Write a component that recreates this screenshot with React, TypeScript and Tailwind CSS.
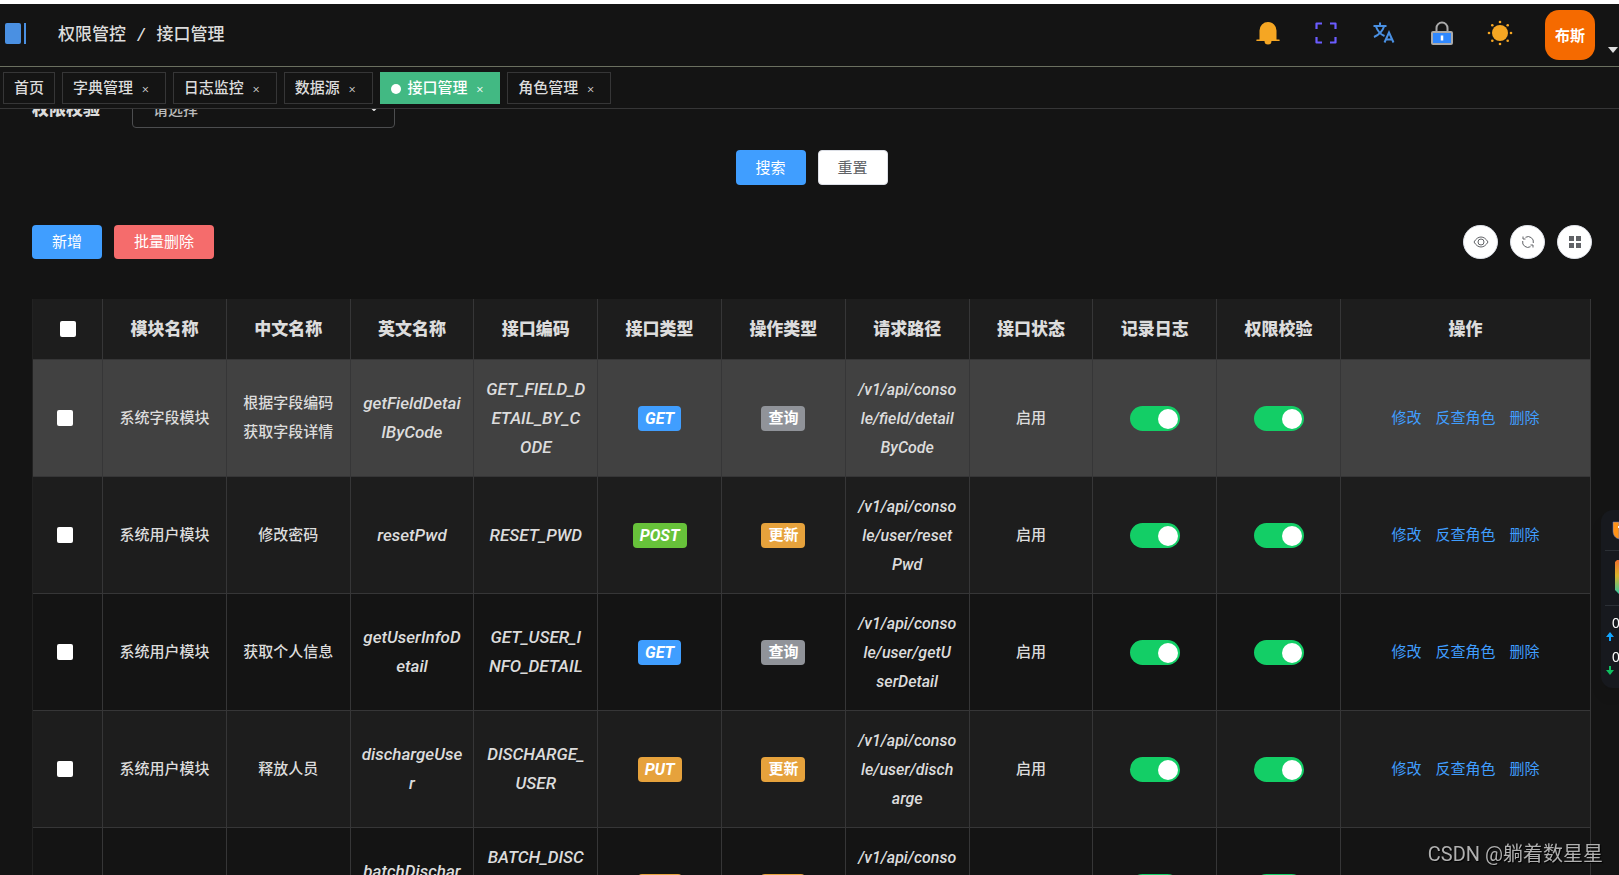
import { useState } from 'react';
import type { ReactNode } from 'react';

type Tone = 'blue' | 'green' | 'orange' | 'gray';

interface ApiRow {
  module: string;
  name: string;
  english: string;
  code: string;
  method: string;
  methodTone: Tone;
  action: string;
  actionTone: Tone;
  path: string;
}

const rows: ApiRow[] = [
  {
    module: '系统字段模块',
    name: '根据字段编码\n获取字段详情',
    english: 'getFieldDetai\nlByCode',
    code: 'GET_FIELD_D\nETAIL_BY_C\nODE',
    method: 'GET',
    methodTone: 'blue',
    action: '查询',
    actionTone: 'gray',
    path: '/v1/api/conso\nle/field/detail\nByCode',
  },
  {
    module: '系统用户模块',
    name: '修改密码',
    english: 'resetPwd',
    code: 'RESET_PWD',
    method: 'POST',
    methodTone: 'green',
    action: '更新',
    actionTone: 'orange',
    path: '/v1/api/conso\nle/user/reset\nPwd',
  },
  {
    module: '系统用户模块',
    name: '获取个人信息',
    english: 'getUserInfoD\netail',
    code: 'GET_USER_I\nNFO_DETAIL',
    method: 'GET',
    methodTone: 'blue',
    action: '查询',
    actionTone: 'gray',
    path: '/v1/api/conso\nle/user/getU\nserDetail',
  },
  {
    module: '系统用户模块',
    name: '释放人员',
    english: 'dischargeUse\nr',
    code: 'DISCHARGE_\nUSER',
    method: 'PUT',
    methodTone: 'orange',
    action: '更新',
    actionTone: 'orange',
    path: '/v1/api/conso\nle/user/disch\narge',
  },
  {
    module: '系统用户模块',
    name: '批量释放人员',
    english: 'batchDischar\ngeUser',
    code: 'BATCH_DISC\nHARGE_USE\nR',
    method: 'PUT',
    methodTone: 'orange',
    action: '更新',
    actionTone: 'orange',
    path: '/v1/api/conso\nle/user/batch\nDischarge',
  },
];

const headers = [
  '模块名称',
  '中文名称',
  '英文名称',
  '接口编码',
  '接口类型',
  '操作类型',
  '请求路径',
  '接口状态',
  '记录日志',
  '权限校验',
];

const tabs = ['首页', '字典管理', '日志监控', '数据源', '接口管理', '角色管理'];

const toneClass: Record<Tone, string> = {
  blue: 'bg-[#409eff]',
  green: 'bg-[#67c23a]',
  orange: 'bg-[#e6a23c]',
  gray: 'bg-[#909399]',
};

const cell = 'border-r border-b border-[#363637] p-0 text-center';

function Tag({ tone, children }: { tone: Tone; children: ReactNode }) {
  return (
    <span
      className={`inline-flex h-[25px] items-center rounded px-[7px] font-bold text-white ${toneClass[tone]}`}
    >
      {children}
    </span>
  );
}

function Toggle({ label }: { label: string }) {
  return (
    <input
      type="checkbox"
      role="switch"
      aria-label={label}
      defaultChecked
      className="mx-auto block h-[25px] w-[50px] appearance-none rounded-full bg-gray-500 p-[3px] pr-[2px] before:block before:h-[20px] before:w-[20px] before:rounded-full before:bg-white checked:bg-[#13ce66] checked:before:ml-auto"
    />
  );
}

function Check({ label }: { label: string }) {
  return (
    <input
      type="checkbox"
      aria-label={label}
      className="block size-4 appearance-none rounded-xs bg-white checked:bg-[#409eff]"
    />
  );
}

function BellIcon() {
  return (
    <svg width="24" height="24" viewBox="0 0 24 24" fill="#f5a623">
      <path d="M3.5 18.5V9.5a8.5 8.5 0 0 1 17 0v9h2.5a.8.8 0 0 1 0 1.6H1a.8.8 0 0 1 0-1.6z" />
      <path d="M8.5 20h7a3.5 3.5 0 0 1-7 0z" />
    </svg>
  );
}

function FullscreenIcon() {
  return (
    <svg width="22" height="22" viewBox="0 0 22 22" fill="none" stroke="#6b5cff" strokeWidth="2.200" strokeLinejoin="round">
      <path d="M1.500 7V1.500H7M15 1.500h5.500V7M20.500 15v5.500H15M7 20.500H1.500V15" />
    </svg>
  );
}

function TranslateIcon() {
  return (
    <svg width="22" height="22" viewBox="0 0 22 22" fill="none" stroke="#4a90e2" strokeWidth="2">
      <path d="M0.5 4h13M7 0.5V4M3 4.5c1.500 4.500 5 8 8.500 9.500M11 4.500c-1.500 5-5.500 8.500-10 10.500" />
      <path d="M11.500 20.500L16 10.500l4.500 10M13 17.500h6.500" />
    </svg>
  );
}

function LockIcon() {
  return (
    <svg width="22" height="24" viewBox="0 0 22 24">
      <path d="M5.500 11V7a5.500 5.500 0 0 1 11 0v4" fill="none" stroke="#aaa" strokeWidth="2" />
      <rect x="1" y="11" width="20" height="12" rx="1" fill="#2f88ff" stroke="#aaa" strokeWidth="2" />
      <path d="M11 14.500v5" stroke="#fff" strokeWidth="2.500" />
    </svg>
  );
}

function SunIcon() {
  return (
    <svg width="26" height="26" viewBox="0 0 26 26" fill="#f5a623">
      <circle cx="13" cy="13" r="8" />
      <circle cx="13" cy="2" r="1.300" />
      <circle cx="13" cy="24" r="1.300" />
      <circle cx="2" cy="13" r="1.300" />
      <circle cx="24" cy="13" r="1.300" />
      <circle cx="5.300" cy="5.300" r="1.300" />
      <circle cx="20.700" cy="5.300" r="1.300" />
      <circle cx="5.300" cy="20.700" r="1.300" />
      <circle cx="20.700" cy="20.700" r="1.300" />
    </svg>
  );
}

function IconButton({ label, children }: { label: string; children: ReactNode }) {
  return (
    <button type="button" aria-label={label} className="flex w-[26px] items-center justify-center">
      {children}
    </button>
  );
}

function Header() {
  return (
    <header className="flex h-[63px] shrink-0 items-center justify-between border-b border-[#6b7060] pl-[5px]">
      <div className="flex items-center">
        <button type="button" aria-label="折叠菜单" className="mb-1 flex h-[21px] gap-[3px]">
          <span className="h-full w-4 rounded-xs bg-[#4a90e2]" />
          <span className="h-full w-[2px] bg-[#4a90e2]" />
        </button>
        <nav className="ml-8 flex gap-3 text-[17px] font-medium text-[#dcdcdc]">
          <span>权限管控</span>
          <span className="italic">/</span>
          <span>接口管理</span>
        </nav>
      </div>
      <div className="flex items-center">
        <div className="flex items-center gap-8 pb-1">
          <IconButton label="消息"><BellIcon /></IconButton>
          <IconButton label="全屏"><FullscreenIcon /></IconButton>
          <IconButton label="语言"><TranslateIcon /></IconButton>
          <IconButton label="锁屏"><LockIcon /></IconButton>
          <IconButton label="主题"><SunIcon /></IconButton>
        </div>
        <button type="button" className="ml-8 flex items-end gap-3">
          <span className="flex size-[50px] items-center justify-center rounded-[14px] bg-[#f56a00] pt-[2px] text-[15px] font-bold text-white">
            布斯
          </span>
          <svg width="12" height="14" viewBox="0 0 12 14" fill="#dcdcdc">
            <path d="M1 1h10L6 7z" />
          </svg>
        </button>
      </div>
    </header>
  );
}

function TabBar() {
  const [active, setActive] = useState('接口管理');
  return (
    <div className="flex h-[42px] shrink-0 items-center gap-[7px] border-b border-[#363637] pl-[3px] text-[15px] font-medium">
      {tabs.map((tab) => (
        <button
          key={tab}
          type="button"
          onClick={() => setActive(tab)}
          className={`flex h-8 items-center border pt-[2px] pl-[10px] ${
            tab === active
              ? 'border-[#42b983] bg-[#42b983] text-white'
              : 'border-[#363637] text-[#dcdcdc]'
          } ${tab === '首页' ? 'pr-[10px]' : 'pr-4'}`}
        >
          {tab === active && <span className="mr-[7px] size-[10px] rounded-full bg-white" />}
          {tab}
          {tab !== '首页' && <span className="ml-[9px] text-[13px] font-light">×</span>}
        </button>
      ))}
    </div>
  );
}

function Toolbar() {
  const round =
    'flex h-[34px] w-[35px] items-center justify-center rounded-full border border-[#dcdfe6] bg-white text-[#606266]';
  return (
    <div className="mt-10 -mr-px flex justify-between text-[15px]">
      <div className="flex gap-3">
        <button type="button" className="h-[34px] w-[70px] rounded bg-[#409eff] text-white">新增</button>
        <button type="button" className="h-[34px] w-[100px] rounded bg-[#f56c6c] text-white">批量删除</button>
      </div>
      <div className="flex gap-3">
        <button type="button" aria-label="显示搜索" className={round}>
          <svg width="16" height="16" viewBox="0 0 16 16" fill="none" stroke="currentColor">
            <path d="M1 8c2-3.300 4.300-5 7-5s5 1.700 7 5c-2 3.300-4.300 5-7 5s-5-1.700-7-5z" />
            <circle cx="8" cy="8" r="3" />
          </svg>
        </button>
        <button type="button" aria-label="刷新" className={round}>
          <svg width="14" height="14" viewBox="0 0 14 14" fill="none" stroke="currentColor">
            <path d="M4.500 2.300A5.300 5.300 0 0 1 12.300 8M9.500 11.700A5.300 5.300 0 0 1 1.700 6" />
            <path d="M2 1.500v2.500h2.500M12 12.500V10H9.500" />
          </svg>
        </button>
        <button type="button" aria-label="列设置" className={round}>
          <svg width="12" height="12" viewBox="0 0 12 12" fill="currentColor">
            <path d="M0 0h5v5H0zM7 0h5v5H7zM0 7h5v5H0zM7 7h5v5H7z" />
          </svg>
        </button>
      </div>
    </div>
  );
}

function ApiTable() {
  return (
    <table className="mt-10 w-full table-fixed border-separate border-spacing-0 border-l border-[#222] text-[15px] leading-[29px] font-medium text-[#dcdcdc]">
      <colgroup>
        <col className="w-[70px]" />
        {headers.map((h) => (
          <col key={h} />
        ))}
        <col className="w-[250px]" />
      </colgroup>
      <thead>
        <tr className="h-[61px] bg-[#1d1d1d] text-[17px]">
          <th className={cell}>
            <div className="flex justify-center">
              <Check label="全选" />
            </div>
          </th>
          {headers.map((h) => (
            <th key={h} className={`${cell} font-black`}>{h}</th>
          ))}
          <th className={`${cell} font-black`}>操作</th>
        </tr>
      </thead>
      <tbody>
        {rows.map((row, i) => (
          <tr
            key={row.code}
            className={`h-[117px] whitespace-pre-line ${
              i === 0 ? 'bg-[#414141]' : i % 2 ? 'bg-[#1d1d1d]' : 'bg-[#141414]'
            }`}
          >
            <td className={cell}>
              <div className="flex justify-center pr-[6px]">
                <Check label={row.code} />
              </div>
            </td>
            <td className={cell}>{row.module}</td>
            <td className={cell}>{row.name}</td>
            <td className={`${cell} text-[17px] italic`}>{row.english}</td>
            <td className={`${cell} text-[17px] italic`}>{row.code}</td>
            <td className={`${cell} text-[16px] italic`}><Tag tone={row.methodTone}>{row.method}</Tag></td>
            <td className={cell}><Tag tone={row.actionTone}>{row.action}</Tag></td>
            <td className={`${cell} text-[16px] italic`}>{row.path}</td>
            <td className={cell}>启用</td>
            <td className={cell}><Toggle label="记录日志" /></td>
            <td className={cell}><Toggle label="权限校验" /></td>
            <td className={cell}>
              <div className="flex justify-center gap-[14px] font-normal text-[#409eff]">
                <a href="#edit">修改</a>
                <a href="#roles">反查角色</a>
                <a href="#delete">删除</a>
              </div>
            </td>
          </tr>
        ))}
      </tbody>
    </table>
  );
}

// Desktop speed monitor docked on the right edge
function SpeedWidget() {
  return (
    <aside className="fixed top-[510px] right-0 h-[178px] w-[18px] overflow-hidden rounded-l-xl bg-[#17191e] shadow-lg">
      <svg width="18" height="178" viewBox="0 0 18 178">
        <path d="M12 12h6v17c-4-1-6-4-6-8z" fill="#ff9318" stroke="#5a7bd0" strokeWidth="0.500" />
        <path d="M17 16h1v2h-1z" fill="#fff" />
        <path d="M4 40.500h14M4 95.500h14" stroke="#2c3036" />
        <defs>
          <linearGradient id="bar" x1="0" y1="0" x2="0" y2="1">
            <stop offset="0" stopColor="#f0702e" />
            <stop offset="0.450" stopColor="#dcb22a" />
            <stop offset="1" stopColor="#35c8a4" />
          </linearGradient>
        </defs>
        <path d="M18 50h-2l-2 2v28l4 4z" fill="url(#bar)" />
        <text x="11" y="118" fill="#fff" fontSize="14" fontFamily="Liberation Sans, sans-serif">0</text>
        <path d="M9 122l4 5h-3v4H8v-4H5z" fill="#12a5ff" />
        <text x="11" y="152" fill="#fff" fontSize="14" fontFamily="Liberation Sans, sans-serif">0</text>
        <path d="M9 165l-4-5h3v-4h2v4h3z" fill="#0fbf60" />
      </svg>
    </aside>
  );
}

export default function App() {
  return (
    <div className="flex h-screen flex-col overflow-hidden border-t-4 border-white bg-[#141414] font-['Roboto','Noto_Sans_CJK_SC',sans-serif]">
      <Header />
      <TabBar />
      <main className="min-h-0 flex-1 overflow-hidden pr-7 pl-8">
        <form onSubmit={(e) => e.preventDefault()}>
          <div className="-mt-[13px] flex h-8 items-center">
            <label htmlFor="auth" className="w-[100px] pb-1 text-[17px] font-black text-[#dcdcdc]">
              权限校验
            </label>
            <div className="grid w-[263px] items-center">
              <select
                id="auth"
                className="col-start-1 row-start-1 h-8 appearance-none rounded border border-[#4c4d4f] bg-transparent pb-1 pl-5 text-[15px] font-medium text-[#bbb]"
              >
                <option>请选择</option>
              </select>
              <svg className="pointer-events-none col-start-1 row-start-1 mr-4 mb-2 justify-self-end" width="10" height="6" viewBox="0 0 10 6" fill="none" stroke="#dcdcdc" strokeWidth="2">
                <path d="M1 1l4 4 4-4" />
              </svg>
            </div>
          </div>
          <div className="mt-[22px] flex justify-center gap-3 text-[15px]">
            <button type="submit" className="h-[35px] w-[70px] rounded bg-[#409eff] pt-px text-white">搜索</button>
            <button type="reset" className="h-[35px] w-[70px] rounded border border-[#dcdfe6] bg-white pt-px text-[#606266]">重置</button>
          </div>
        </form>
        <Toolbar />
        <ApiTable />
      </main>
      <SpeedWidget />
      <p className="fixed right-4 bottom-[6px] text-[20px] leading-[30px] text-[#b0b0b0] [text-shadow:1px_1px_1px_#000]">
        CSDN @躺着数星星
      </p>
    </div>
  );
}
